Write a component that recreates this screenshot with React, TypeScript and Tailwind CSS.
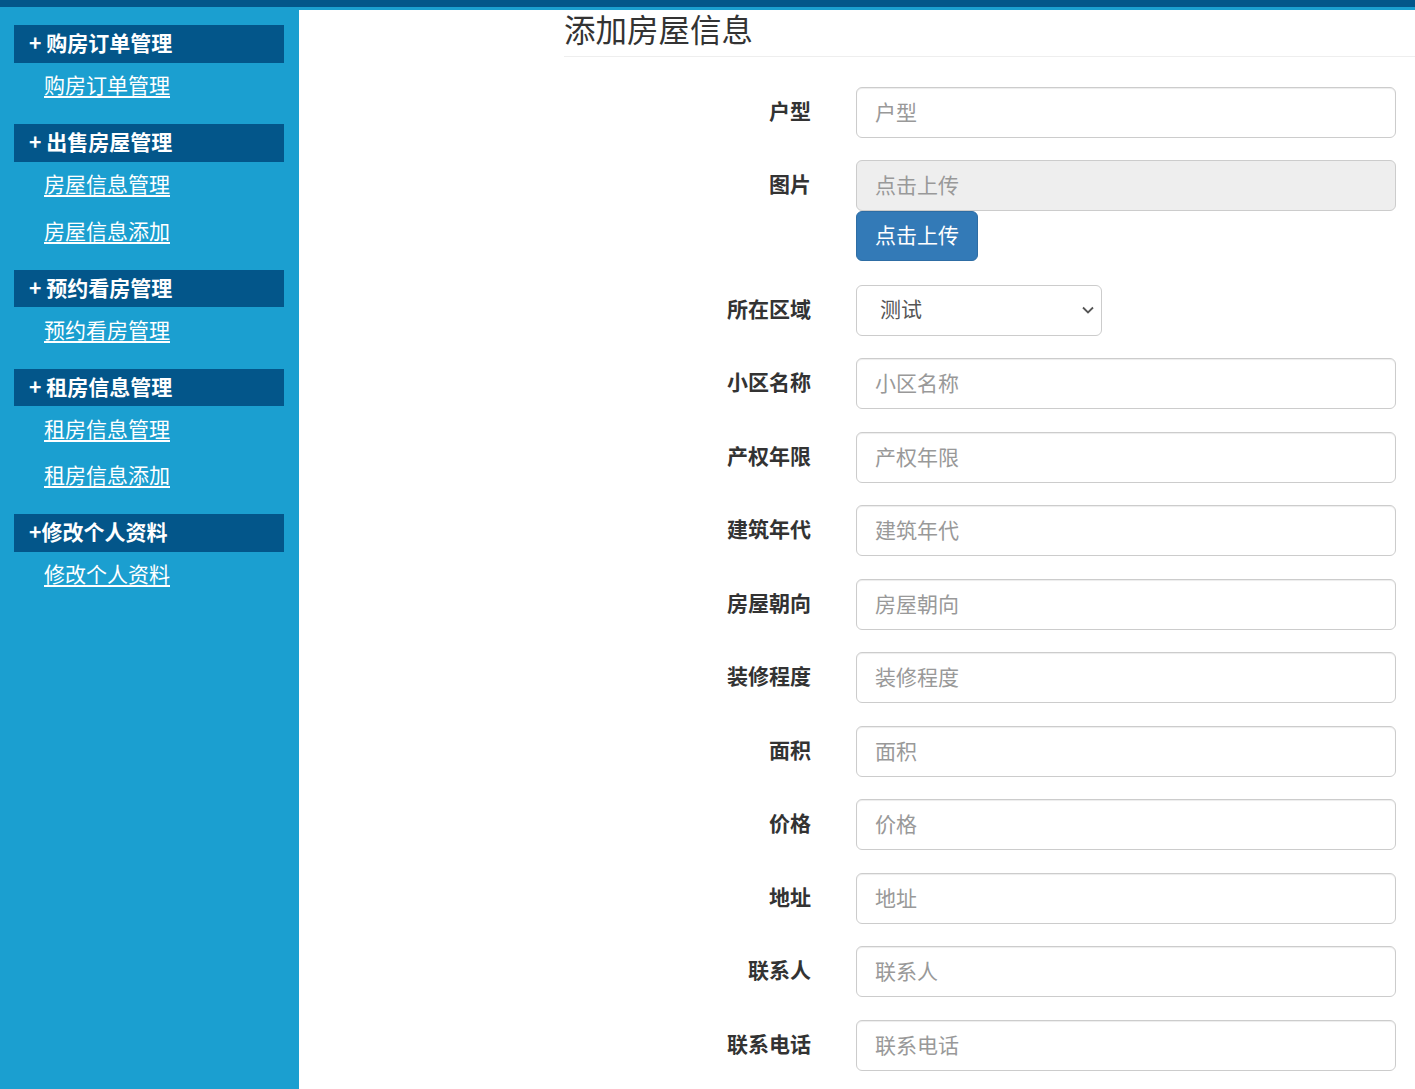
import React from 'react';

const FONT = { fontFamily: '"Noto Sans CJK SC", "Noto Sans", sans-serif' };

const MENU = [
  { title: '+ 购房订单管理', links: ['购房订单管理'] },
  { title: '+ 出售房屋管理', links: ['房屋信息管理', '房屋信息添加'] },
  { title: '+ 预约看房管理', links: ['预约看房管理'] },
  { title: '+ 租房信息管理', links: ['租房信息管理', '租房信息添加'] },
  { title: '+修改个人资料', links: ['修改个人资料'] },
];

const FIELDS_AFTER = ['小区名称', '产权年限', '建筑年代', '房屋朝向', '装修程度', '面积', '价格', '地址', '联系人', '联系电话'];

function Label({ text }: { text: string }) {
  return (
    <div className="w-[247px] h-[51px] shrink-0 flex items-center justify-end pb-[3px] text-[21px] font-bold text-[#333]">
      {text}
    </div>
  );
}

function TextRow({ label, className = 'mb-[22.5px]' }: { label: string; className?: string }) {
  return (
    <div className={`flex gap-[45px] ${className}`}>
      <Label text={label} />
      <input
        placeholder={label}
        className="flex-1 h-[51px] border border-[#ccc] rounded-[6px] px-[18px] pb-[3px] text-[21px] text-[#555] placeholder:text-[#999] bg-white outline-none shadow-[inset_0_1px_1px_rgba(0,0,0,0.075)]"
        style={FONT}
      />
    </div>
  );
}

export default function App() {
  return (
    <div className="h-[1089px] overflow-hidden flex flex-col bg-white" style={FONT}>
      <div className="h-[7px] bg-[#03568a] shrink-0" />
      <div className="h-[3px] bg-[#1b9fd0] shrink-0" />
      <div className="flex flex-1 min-h-0">
        {/* Sidebar */}
        <aside className="w-[299px] shrink-0 bg-[#1b9fd0] pl-[14px] pr-[15px] pt-[15px]">
          {MENU.map((m) => (
            <div key={m.title} className="mb-[15px]">
              <div className="h-[37.5px] bg-[#03568a] flex items-center pl-[15px] pb-[2px] text-white font-bold text-[21px]">
                {m.title}
              </div>
              {m.links.map((l) => (
                <div key={l} className="h-[46.5px] flex items-center pl-[30px] pb-[2px]">
                  <a href="#" className="text-white text-[21px] underline underline-offset-[3px]">
                    {l}
                  </a>
                </div>
              ))}
            </div>
          ))}
        </aside>

        {/* Content */}
        <main className="flex-1 min-w-0">
          <div className="ml-[265px] h-[47px] border-b border-[#eee] flex items-center pb-[9px]">
            <h1 className="text-[31.5px] text-[#333] font-normal leading-none">添加房屋信息</h1>
          </div>

          <div className="ml-[265px] mr-[19px] mt-[30px]">
            <TextRow label="户型" className="mb-[22px]" />

            <div className="flex gap-[45px] mb-[24px]">
              <Label text="图片" />
              <div className="flex-1 flex flex-col items-start">
                <input
                  disabled
                  placeholder="点击上传"
                  className="w-full h-[51px] border border-[#ccc] rounded-[6px] px-[18px] pb-[3px] text-[21px] placeholder:text-[#999] bg-[#eee] outline-none"
                  style={FONT}
                />
                <button className="h-[50px] px-[18px] pb-[3px] bg-[#337ab7] border border-[#2e6da4] rounded-[6px] text-white text-[21px]">
                  点击上传
                </button>
              </div>
            </div>

            <div className="flex gap-[45px] mb-[22px]">
              <Label text="所在区域" />
              <div className="relative w-[246px] h-[51px]">
                <select
                  className="w-full h-full appearance-none border border-[#ccc] rounded-[6px] pl-[23px] pb-[3px] text-[21px] text-[#555] bg-white outline-none"
                  style={FONT}
                  defaultValue="测试"
                >
                  <option>测试</option>
                </select>
                <svg
                  className="absolute right-[7px] top-[18px] pointer-events-none"
                  width="14"
                  height="14"
                  viewBox="0 0 14 14"
                  fill="none"
                  stroke="#555"
                  strokeWidth="1.8"
                >
                  <path d="M2 4.5l5 5 5-5" />
                </svg>
              </div>
            </div>

            {FIELDS_AFTER.map((f) => (
              <TextRow key={f} label={f} />
            ))}
          </div>
        </main>
      </div>
    </div>
  );
}
